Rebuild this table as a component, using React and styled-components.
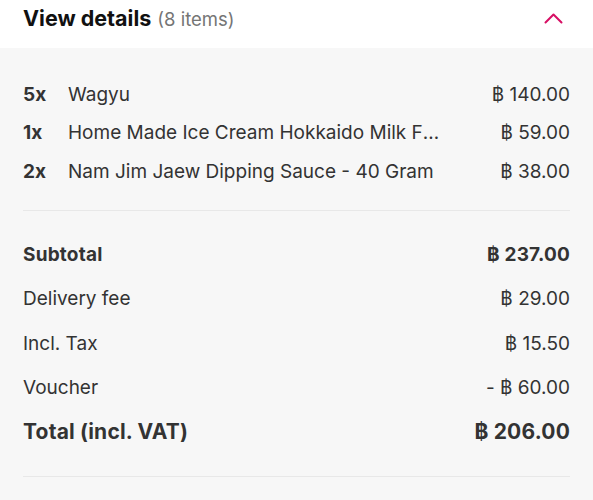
import React from "react";
import styled, { createGlobalStyle } from "styled-components";

const Global = createGlobalStyle`
  html, body { margin: 0; padding: 0; background: #f7f7f7; }
  body { font-family: Inter, "Noto Sans", "DejaVu Sans", sans-serif; -webkit-font-smoothing: antialiased; }
`;

const Page = styled.div`
  width: 593px;
  height: 500px;
  overflow: hidden;
  background: #f7f7f7;
  color: #333;
`;

const Header = styled.div`
  height: 48px;
  background: #fff;
  display: flex;
  align-items: center;
  justify-content: space-between;
  padding: 0 23px;
  box-sizing: border-box;
`;

const Title = styled.div`
  font-size: 21.5px;
  font-weight: 700;
  color: #111;
  margin-top: -12px;
  white-space: nowrap;
`;

const Count = styled.span`
  font-size: 18.5px;
  font-weight: 400;
  color: #757575;
  margin-left: 6px;
`;

const Chevron = styled.svg`
  width: 19px;
  height: 12px;
  margin-right: 7px;
  margin-top: -13px;
`;

const Body = styled.div`
  padding: 0 23px;
`;

const Items = styled.div`
  padding-top: 27px;
  padding-bottom: 19px;
  border-bottom: 1.5px solid #e8e8e8;
`;

const ItemRow = styled.div`
  height: 38.5px;
  display: flex;
  align-items: center;
  font-size: 19px;
`;

const Qty = styled.span`
  width: 45px;
  font-weight: 700;
  flex: none;
`;

const Name = styled.span`
  flex: 1;
  min-width: 0;
  white-space: nowrap;
  overflow: hidden;
  text-overflow: ellipsis;
  padding-right: 59px;
`;

const Price = styled.span`
  flex: none;
  text-align: right;
`;

const Summary = styled.div`
  padding-top: 22px;
  padding-bottom: 22px;
  border-bottom: 1.5px solid #e8e8e8;
`;

const SumRow = styled.div`
  height: 44.3px;
  display: flex;
  align-items: center;
  justify-content: space-between;
  font-size: ${(p) => p.$size || 19}px;
  font-weight: ${(p) => (p.$bold ? 700 : 400)};
  letter-spacing: ${(p) => (p.$bold ? "0.2px" : "0")};
`;

const items = [
  { q: "5x", n: "Wagyu", p: "฿ 140.00" },
  { q: "1x", n: "Home Made Ice Cream Hokkaido Milk Flavour", p: "฿ 59.00" },
  { q: "2x", n: "Nam Jim Jaew Dipping Sauce - 40 Gram", p: "฿ 38.00" },
];

const sums = [
  { l: "Subtotal", v: "฿ 237.00", b: true },
  { l: "Delivery fee", v: "฿ 29.00" },
  { l: "Incl. Tax", v: "฿ 15.50" },
  { l: "Voucher", v: "- ฿ 60.00" },
  { l: "Total (incl. VAT)", v: "฿ 206.00", b: true, s: 21 },
];

export default function App() {
  return (
    <Page>
      <Global />
      <Header>
        <Title>
          View details<Count>(8 items)</Count>
        </Title>
        <Chevron viewBox="0 0 19 12">
          <path d="M1.5 10.5 L9.5 2.5 L17.5 10.5" fill="none" stroke="#d70f64" strokeWidth="2" strokeLinecap="round" strokeLinejoin="round" />
        </Chevron>
      </Header>
      <Body>
        <Items>
          {items.map((it) => (
            <ItemRow key={it.q}>
              <Qty>{it.q}</Qty>
              <Name>{it.n}</Name>
              <Price>{it.p}</Price>
            </ItemRow>
          ))}
        </Items>
        <Summary>
          {sums.map((s) => (
            <SumRow key={s.l} $bold={s.b} $size={s.s}>
              <span>{s.l}</span>
              <span>{s.v}</span>
            </SumRow>
          ))}
        </Summary>
      </Body>
    </Page>
  );
}
